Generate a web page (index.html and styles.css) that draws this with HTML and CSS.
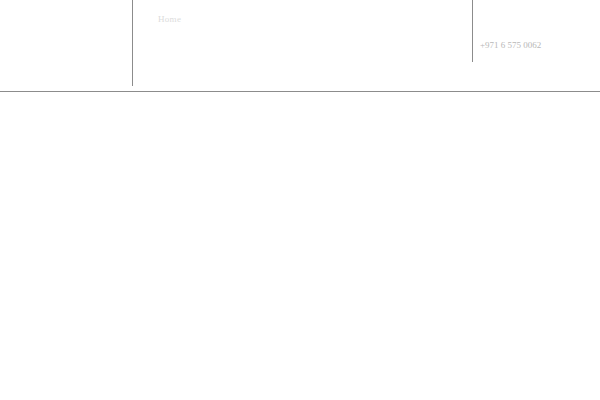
FILE: index.html
```html
<!DOCTYPE html>
<html>
<head>
<meta charset="utf-8">
<link rel="stylesheet" href="styles.css">
</head>
<body>
<header class="site-header">
  <div class="logo-col"></div>
  <nav class="nav-col">
    <a class="nav-link" href="#">Home</a>
  </nav>
  <div class="contact-col">
    <span class="phone">+971 6 575 0062</span>
  </div>
</header>
<main class="content"></main>
</body>
</html>
```
FILE: styles.css
```css
html, body {
  margin: 0;
  padding: 0;
  background: #ffffff;
  font-family: "Liberation Serif", "DejaVu Serif", serif;
}
.site-header {
  display: flex;
  align-items: flex-start;
  height: 91px;
  border-bottom: 1px solid #8c8c8c;
}
.logo-col {
  width: 132px;
  height: 86px;
  border-right: 1px solid #8c8c8c;
  flex: none;
}
.nav-col {
  width: 339px;
  flex: none;
  padding: 8px 0 0 25px;
  box-sizing: border-box;
}
.nav-link {
  font-size: 9px;
  letter-spacing: 0.3px;
  color: #dcdcdc;
  text-decoration: none;
}
.contact-col {
  flex: none;
  height: 62px;
  border-left: 1px solid #8c8c8c;
  padding: 34px 0 0 7px;
  box-sizing: border-box;
}
.phone {
  font-size: 9px;
  color: #b8b8b8;
}
.content {
  display: block;
}
```
